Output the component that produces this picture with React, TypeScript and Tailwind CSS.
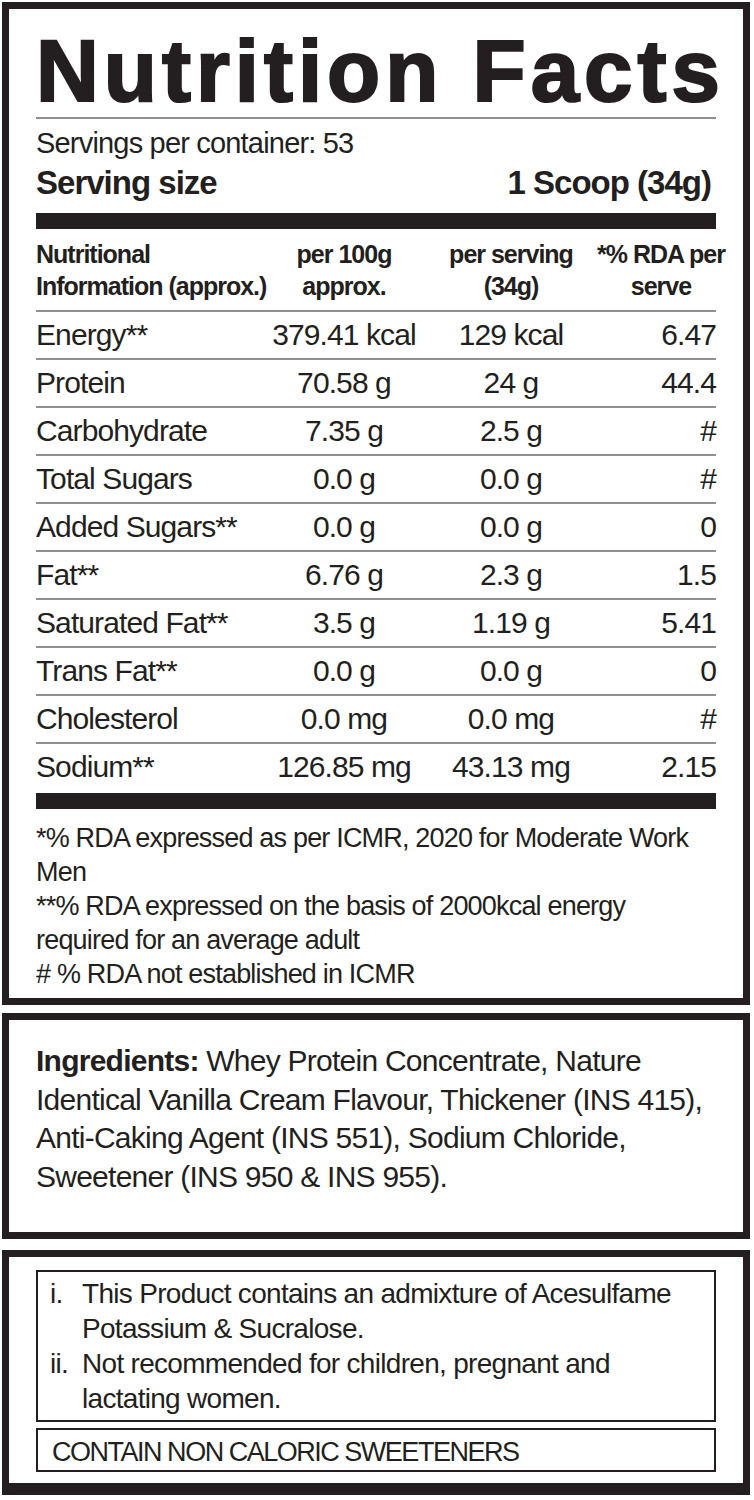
import React from "react";

const sans = "font-['Liberation_Sans',Arial,sans-serif]";

const rows = [
    {name: "Energy**", per100: "379.41 kcal", perServe: "129 kcal", rda: "6.47"},
    {name: "Protein", per100: "70.58 g", perServe: "24 g", rda: "44.4"},
    {name: "Carbohydrate", per100: "7.35 g", perServe: "2.5 g", rda: "#"},
    {name: "Total Sugars", per100: "0.0 g", perServe: "0.0 g", rda: "#"},
    {name: "Added Sugars**", per100: "0.0 g", perServe: "0.0 g", rda: "0"},
    {name: "Fat**", per100: "6.76 g", perServe: "2.3 g", rda: "1.5"},
    {name: "Saturated Fat**", per100: "3.5 g", perServe: "1.19 g", rda: "5.41"},
    {name: "Trans Fat**", per100: "0.0 g", perServe: "0.0 g", rda: "0"},
    {name: "Cholesterol", per100: "0.0 mg", perServe: "0.0 mg", rda: "#"},
    {name: "Sodium**", per100: "126.85 mg", perServe: "43.13 mg", rda: "2.15"},
];

const cols = "grid grid-cols-[236px_144px_190px_110px]";

export default function App() {
    return (
        <div className={`min-h-[1500px] w-[754px] bg-white pl-[2px] pt-[2px] text-[#231f20] ${sans}`}>
            {/* nutrition facts panel */}
            <div className="w-[748px] border-[7px] border-[#231f20] px-[27px] pt-[17.5px] pb-[7px]">
                <h1 className="text-[87px] leading-[87px] font-bold tracking-[5px] whitespace-nowrap [-webkit-text-stroke:2.2px_#231f20]">
                    Nutrition Facts
                </h1>
                <div className="mt-[3.5px] h-[2px] bg-[#8f8f8f]"/>
                <div className="mt-[8.5px] text-[29px] leading-[30px] tracking-[-0.028em]">Servings per container: 53</div>
                <div className="mt-[6.5px] flex items-baseline justify-between text-[33px] leading-[38px] font-bold tracking-[-0.03em]">
                    <span>Serving size</span>
                    <span className="pr-[5px]">1 Scoop (34g)</span>
                </div>
                <div className="mt-[11px] h-[16px] bg-[#231f20]"/>

                <div className={`${cols} h-[81px] pt-[9px] text-[25px] leading-[32px] font-bold tracking-[-0.04em]`}>
                    <div className="whitespace-nowrap">
                        <div>Nutritional</div>
                        <div>Information (approx.)</div>
                    </div>
                    <div className="flex flex-col items-center whitespace-nowrap">
                        <span>per 100g</span>
                        <span>approx.</span>
                    </div>
                    <div className="flex flex-col items-center whitespace-nowrap">
                        <span>per serving</span>
                        <span>(34g)</span>
                    </div>
                    <div className="flex flex-col items-center whitespace-nowrap">
                        <span>*% RDA per</span>
                        <span>serve</span>
                    </div>
                </div>

                {rows.map((r) => (
                    <div key={r.name}
                         className={`${cols} h-[48px] border-t-2 border-[#8f8f8f] text-[30px] leading-[46px] tracking-[-0.03em] whitespace-nowrap`}>
                        <div>{r.name}</div>
                        <div className="flex justify-center">{r.per100}</div>
                        <div className="flex justify-center">{r.perServe}</div>
                        <div className="text-right">{r.rda}</div>
                    </div>
                ))}

                <div className="mt-[3px] h-[16px] bg-[#231f20]"/>
                <div className="mt-[12px] text-[27px] leading-[34px] tracking-[-0.03em] whitespace-nowrap">
                    <div>*% RDA expressed as per ICMR, 2020 for Moderate Work</div>
                    <div>Men</div>
                    <div>**% RDA expressed on the basis of 2000kcal energy</div>
                    <div>required for an average adult</div>
                    <div># % RDA not established in ICMR</div>
                </div>
            </div>

            {/* ingredients */}
            <div className="mt-[8px] w-[748px] border-[7px] border-[#231f20] px-[27px] pt-[22px] pb-[36px] text-[30px] leading-[38.5px] tracking-[-0.025em] whitespace-nowrap">
                <div><span className="font-bold">Ingredients:</span> Whey Protein Concentrate, Nature</div>
                <div>Identical Vanilla Cream Flavour, Thickener (INS 415),</div>
                <div>Anti-Caking Agent (INS 551), Sodium Chloride,</div>
                <div>Sweetener (INS 950 &amp; INS 955).</div>
            </div>

            {/* warnings */}
            <div className="mt-[11px] w-[748px] border-[7px] border-b-[12px] border-[#231f20] px-[27px] pt-[13px] pb-[11px]">
                <div className="border-2 border-[#231f20] pl-[12px] pt-[4px] pb-[4px] text-[28px] leading-[35px] tracking-[-0.025em] whitespace-nowrap">
                    <div className="flex">
                        <span className="w-[32px] shrink-0">i.</span>
                        <span>This Product contains an admixture of Acesulfame<br/>Potassium &amp; Sucralose.</span>
                    </div>
                    <div className="flex">
                        <span className="w-[32px] shrink-0">ii.</span>
                        <span>Not recommended for children, pregnant and<br/>lactating women.</span>
                    </div>
                </div>
                <div className="mt-[6px] h-[44px] border-2 border-[#231f20] pl-[14px] pt-[4px] text-[27px] leading-[36px] tracking-[-0.055em] whitespace-nowrap">
                    CONTAIN NON CALORIC SWEETENERS
                </div>
            </div>
        </div>
    );
}
